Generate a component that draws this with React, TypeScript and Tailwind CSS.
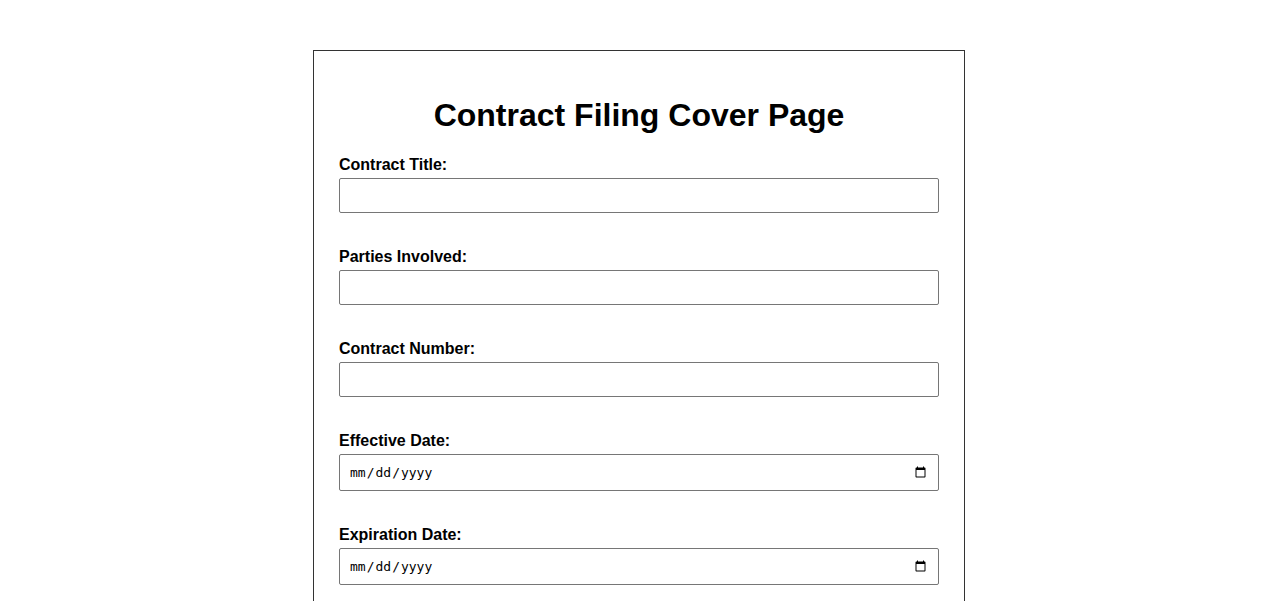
import React from 'react';

const fields = [
  { id: 'title', label: 'Contract Title:', type: 'text' },
  { id: 'parties', label: 'Parties Involved:', type: 'text' },
  { id: 'number', label: 'Contract Number:', type: 'text' },
  { id: 'effective', label: 'Effective Date:', type: 'date' },
  { id: 'expiration', label: 'Expiration Date:', type: 'date' },
  { id: 'value', label: 'Contract Value:', type: 'text' },
  { id: 'department', label: 'Responsible Department:', type: 'text' },
];

const App: React.FC = () => {
  return (
    <div className="min-h-screen bg-white pt-[50px] font-['Liberation_Sans',Arial,sans-serif] text-black">
      <div className="mx-auto w-[652px] border border-[#333] px-[25px] pt-[25px] pb-[25px]">
        <h1 className="mt-[21px] mb-[22px] text-center text-[32px] font-bold leading-[37px]">
          Contract Filing Cover Page
        </h1>
        {fields.map((f) => (
          <div key={f.id} className="mb-[35px]">
            <label htmlFor={f.id} className="mb-[4px] block text-[16px] font-bold leading-[18px]">
              {f.label}
            </label>
            {f.type === 'date' ? (
              <input
                id={f.id}
                type="date"
                className="block h-[37px] w-full rounded-[2px] border border-[#767676] px-[9px] font-['DejaVu_Sans_Mono',monospace] text-[13px]"
              />
            ) : (
              <input
                id={f.id}
                type="text"
                className="block h-[35px] w-full rounded-[2px] border border-[#767676] px-[8px] text-[16px]"
              />
            )}
          </div>
        ))}
      </div>
    </div>
  );
};

export default App;
